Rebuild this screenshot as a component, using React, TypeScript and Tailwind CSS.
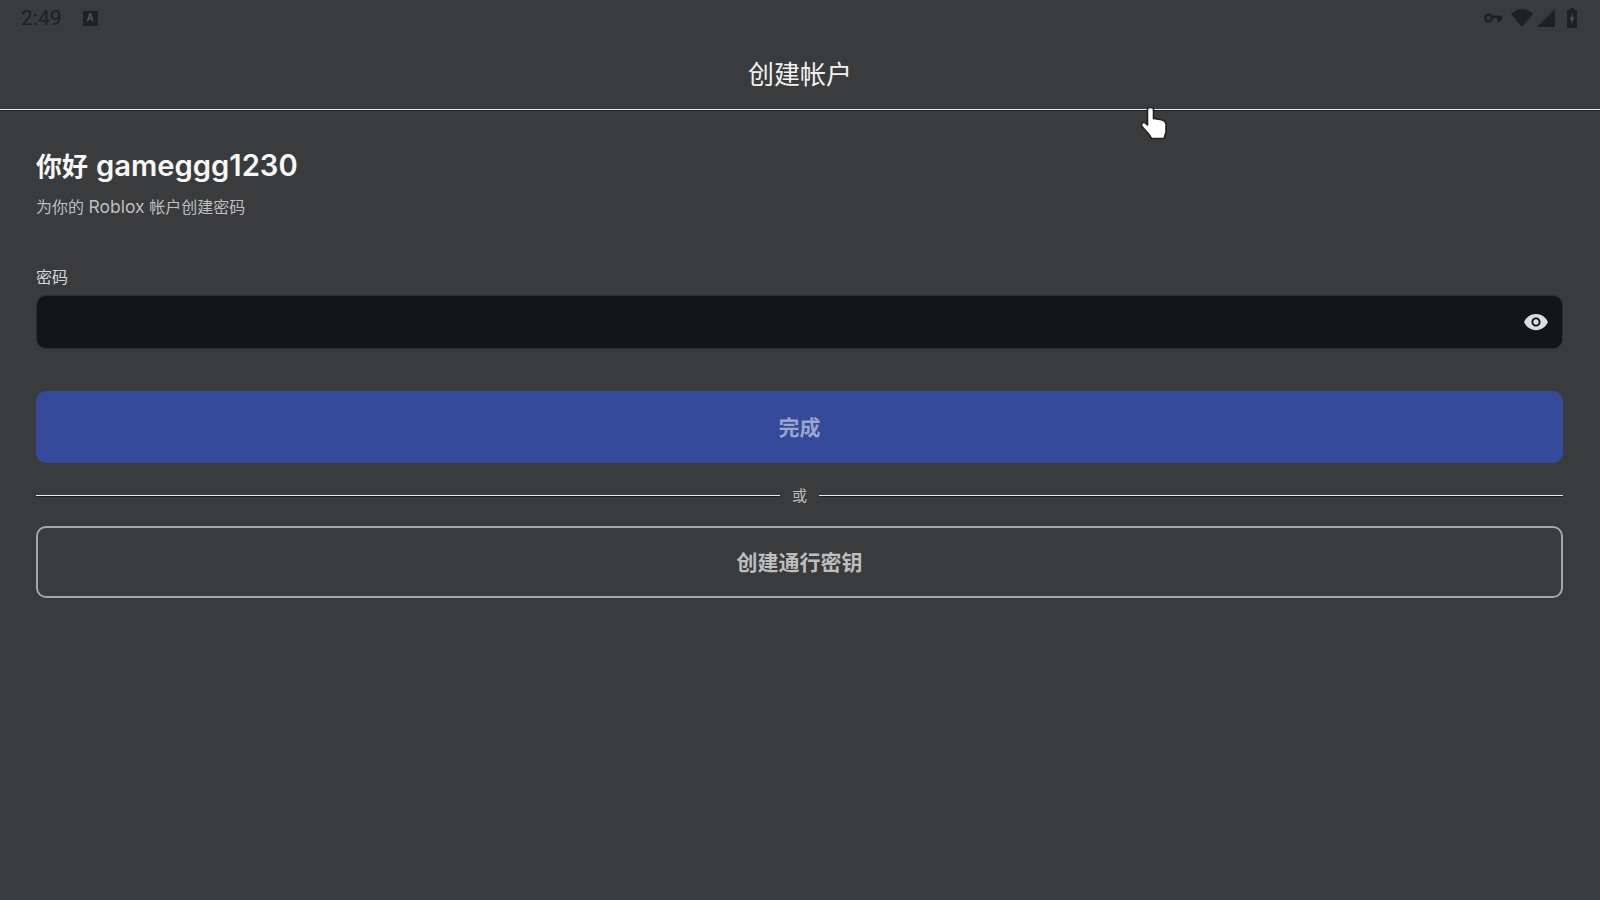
const font = { fontFamily: '"Inter", "Noto Sans CJK SC", sans-serif' };

function StatusBar() {
    return (
        <div className="flex h-9 items-center justify-between pl-[21px] pr-[23px] text-[#1f2022]">
            <div className="flex items-center gap-[21px]">
                <span className="font-['Roboto',sans-serif] text-[21px] leading-none">2:49</span>
                <div className="flex h-[15px] w-[15px] items-center justify-center rounded-[1px] bg-[#202124]">
                    <span className="font-['Roboto',sans-serif] text-[10px] font-bold leading-none text-[#55575a]">A</span>
                </div>
            </div>
            <div className="flex items-center">
                <svg width="18" height="10" viewBox="0 0 18 10" className="mr-[9px]" fill="none" stroke="currentColor" strokeWidth="2.6">
                    <circle cx="4.6" cy="5" r="3.3" />
                    <path d="M8 3.8H17.5M14.5 3.8V9M17 3.8V7.5" />
                </svg>
                <svg width="22" height="18" viewBox="0 0 22 18" className="mr-[4px]" fill="currentColor">
                    <path d="M0 5C3 2 6.8 0 11 0S19 2 22 5L11 18Z" />
                </svg>
                <svg width="18" height="18" viewBox="0 0 18 18" className="mr-[12px]" fill="currentColor">
                    <path d="M18 0V18H0Z" />
                </svg>
                <svg width="10" height="20" viewBox="0 0 10 20" fill="currentColor">
                    <path d="M3 0H7V2H10V20H0V2H3Z" />
                    <path d="M6 5L2.8 11.5H4.6L4 16L7.4 9.5H5.4Z" fill="#55575a" />
                </svg>
            </div>
        </div>
    );
}

function HandCursor() {
    return (
        <svg width="28" height="34" viewBox="0 0 28 34" className="absolute left-[1140px] top-[106px]">
            <path
                d="M7.5 3C7.5 1 13.5 1 13.5 3V12.5L20 13.5C24 14.2 26 15.5 26 18.5V26L24 32.5H11.5L9 28.5L2 20.5C1 19 1.5 16.5 4 16.5C5.5 16.5 6.5 18 7.5 19Z"
                fill="#fff"
                stroke="#222"
                strokeWidth="1.6"
                strokeLinejoin="round"
            />
        </svg>
    );
}

function EyeIcon() {
    return (
        <svg width="26" height="26" viewBox="0 0 24 24" fill="#dcdddf">
            <path d="M12 4.5C7 4.5 2.73 7.61 1 12c1.73 4.39 6 7.5 11 7.5s9.27-3.11 11-7.5c-1.73-4.39-6-7.5-11-7.5zM12 16.2c-2.3 0-4.2-1.9-4.2-4.2s1.9-4.2 4.2-4.2 4.2 1.9 4.2 4.2-1.9 4.2-4.2 4.2zm0-6.7c-1.4 0-2.5 1.1-2.5 2.5s1.1 2.5 2.5 2.5 2.5-1.1 2.5-2.5-1.1-2.5-2.5-2.5z" />
        </svg>
    );
}

function Rule() {
    return <div className="h-[2px] flex-1 border-t border-[#e4ebf0] bg-[#16232d]" />;
}

export default function App() {
    return (
        <div className="relative h-[900px] w-[1600px] overflow-hidden bg-[#393b3d]" style={font}>
            <StatusBar />
            <div className="flex h-[73px] items-center justify-center pt-[5px] text-[26px] leading-none text-[#f1f1f2]">
                创建帐户
            </div>
            <div className="h-[2px] border-t border-[#e4ebf0] bg-[#16232d]" />

            <div className="pl-9 pr-[37px]">
                <h1 className="mt-[36px] flex h-[39px] items-baseline gap-[8px] text-[26px] font-semibold leading-[38px] text-[#f7f7f8]">
                    <span>你好</span>
                    <span className="text-[29.2px]">gameggg1230</span>
                </h1>
                <p className="mt-[9px] text-[16px] leading-6 text-[#bdbebe]">
                    为你的 <span className="text-[17.5px]">Roblox</span> 帐户创建密码
                </p>

                <label className="mt-[46px] block text-[16px] leading-6 text-[#d5d7dd]">密码</label>
                <div className="mt-[6px] flex h-[54px] items-center justify-end rounded-[10px] border border-[#2e2f31] bg-[#141517] pr-[13px]">
                    <EyeIcon />
                </div>

                <button className="mt-[42px] flex h-[72px] w-full items-center justify-center rounded-[10px] bg-[#354a9b] pt-[2px] text-[21px] font-semibold text-[#9ba5ce]">
                    完成
                </button>

                <div className="mt-[23px] flex h-5 items-center gap-3">
                    <Rule />
                    <span className="w-[15px] text-[15px] leading-5 text-[#bdbebe]">或</span>
                    <Rule />
                </div>

                <button className="mt-[20px] flex h-[72px] w-full items-center justify-center rounded-[10px] border-2 border-[#a5a6a7] pt-[2px] text-[21px] font-semibold text-[#bdbebe]">
                    创建通行密钥
                </button>
            </div>

            <HandCursor />
        </div>
    );
}
